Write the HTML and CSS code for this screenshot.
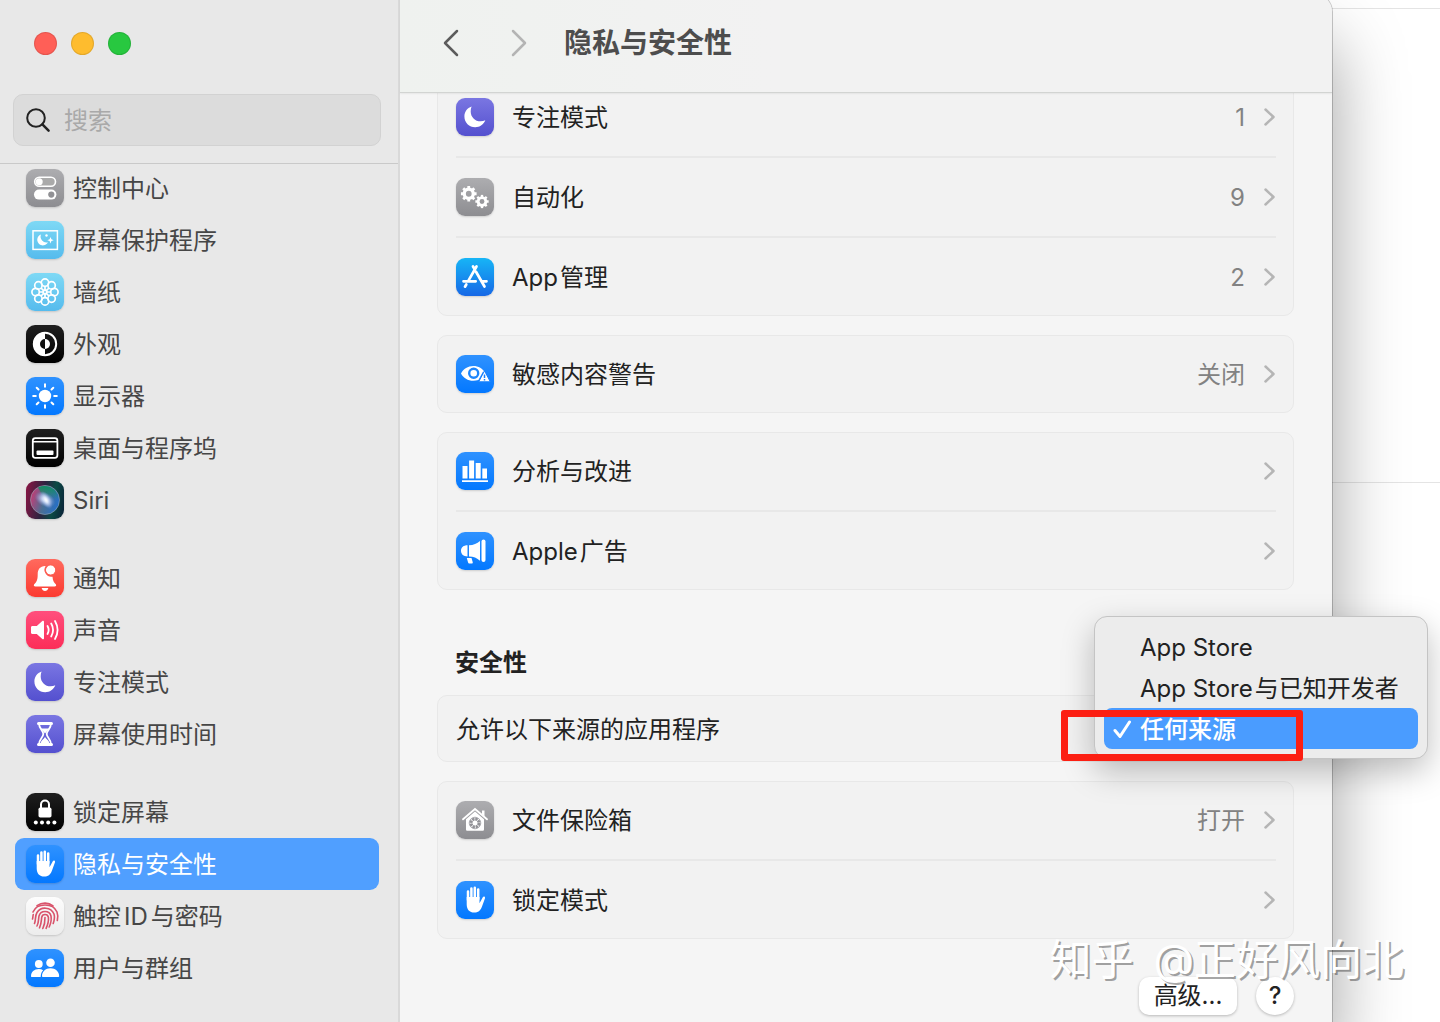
FILE: index.html
```html
<!DOCTYPE html>
<html lang="zh-CN">
<head>
    <meta charset="UTF-8">
    <meta name="viewport" content="width=device-width, initial-scale=1.0">
    <title>隐私与安全性</title>
    <link rel="stylesheet" href="styles.css">
</head>
<body>
    <svg class="sprite" aria-hidden="true">
        <symbol id="moon" viewBox="0 0 38 38">
            <path fill="#fff" d="M15.6 8.6c-4.400 1.500-7.200 5.400-7.200 9.900 0 6 4.800 10.800 10.800 10.800 4.500 0 8.600-2.800 10.100-7-1.500.7-3 1-4.600 1-5.600 0-10-4.300-10-9.900 0-1.700.3-3.300.9-4.800z"/>
        </symbol>
        <symbol id="hand" viewBox="0 0 38 38">
            <path fill="none" stroke="#fff" stroke-width="2.500" stroke-linecap="round" d="M12 19V10.500M15.400 18V7.500M18.800 18V6.800M22.200 18V8.500"/>
            <path fill="#fff" d="M10.700 16h12.800v6.200l3.300-5.900c.8-1.300 2.600-.6 2.200.9l-3 8.300c-1.500 4.300-4 6.100-7.700 6.100-4.800 0-7.600-3.200-7.600-8.100z"/>
        </symbol>
        <symbol id="chevron" viewBox="0 0 12 20">
            <path fill="none" stroke="currentColor" stroke-width="2.500" stroke-linecap="round" stroke-linejoin="round" d="M1.500 2.500l8 7.500-8 7.500"/>
        </symbol>
        <symbol id="gear" viewBox="-10 -10 20 20">
            <circle r="5.500" fill="none" stroke="#fff" stroke-width="4"/>
            <path stroke="#fff" stroke-width="3.400" d="M0-9.500V-6M0 9.500V6M-9.500 0H-6M9.500 0H6M-6.700-6.700l2.400 2.400M6.700 6.700L4.300 4.300M-6.700 6.700l2.400-2.400M6.700-6.700L4.300-4.300"/>
        </symbol>
    </svg>

    <div class="backdrop">
        <div class="backdrop-line"></div>
        <div class="backdrop-line"></div>
    </div>

    <div class="window">
        <aside class="sidebar">
            <div class="sidebar-header">
                <div class="lights">
                    <button class="light red" aria-label="关闭"></button>
                    <button class="light yellow" aria-label="最小化"></button>
                    <button class="light green" aria-label="缩放"></button>
                </div>
                <label class="search">
                    <svg width="26" height="26" viewBox="0 0 26 26"><circle cx="11" cy="11" r="8.800" fill="none" stroke="#222" stroke-width="2"/><path d="M17.400 17.400l6.200 6.200" stroke="#222" stroke-width="2.500" stroke-linecap="round"/></svg>
                    <input type="text" placeholder="搜索" aria-label="搜索">
                </label>
            </div>

            <nav class="menu">
                <ul>
                    <li><a href="#"><svg class="icon gray" viewBox="0 0 38 38"><rect x="8.700" y="8.200" width="20.800" height="9" rx="4.500" fill="#aaa" stroke="#fff" stroke-width="1.600"/><circle cx="13.200" cy="12.700" r="3.500" fill="#fff"/><rect x="8" y="20.600" width="22.400" height="10" rx="5" fill="#fff"/><circle cx="25.300" cy="25.600" r="3.100" fill="#919195"/></svg><span>控制中心</span></a></li>
                    <li><a href="#"><svg class="icon sky" viewBox="0 0 38 38"><rect x="7" y="9.800" width="24.400" height="18.600" fill="none" stroke="#fff" stroke-width="1.500"/><path fill="#fff" d="M15 13.500a5.600 5.600 0 1 0 6.900 7.700 5.800 5.800 0 0 1-6.900-7.700zM24.500 16l.9 2.300 2.300.9-2.300.9-.9 2.300-.9-2.300-2.300-.9 2.300-.9z"/><circle cx="20.500" cy="14.500" r="1.200" fill="#fff"/></svg><span>屏幕保护程序</span></a></li>
                    <li><a href="#"><svg class="icon sky" viewBox="0 0 38 38"><g fill="none" stroke="#fff" stroke-width="1.700"><circle cx="19" cy="9.600" r="3.700"/><circle cx="25.600" cy="12.400" r="3.700"/><circle cx="28.400" cy="19" r="3.700"/><circle cx="25.600" cy="25.600" r="3.700"/><circle cx="19" cy="28.400" r="3.700"/><circle cx="12.400" cy="25.600" r="3.700"/><circle cx="9.600" cy="19" r="3.700"/><circle cx="12.400" cy="12.400" r="3.700"/><circle cx="19" cy="19" r="1.800"/><path d="M19 13.300v4M19 24.700v-4M13.300 19h4M24.700 19h-4M15 15l2.700 2.700M23 23l-2.700-2.700M15 23l2.700-2.700M23 15l-2.700 2.700"/></g></svg><span>墙纸</span></a></li>
                    <li><a href="#"><svg class="icon black" viewBox="0 0 38 38"><circle cx="19" cy="19" r="11.200" fill="none" stroke="#fff" stroke-width="2"/><path fill="#fff" d="M19 7.300a11.700 11.700 0 0 0 0 23.400V24a5 5 0 0 1 0-10z"/><path fill="#fff" d="M19 14a5 5 0 0 1 0 10z"/></svg><span>外观</span></a></li>
                    <li><a href="#"><svg class="icon blue" viewBox="0 0 38 38"><circle cx="19" cy="19" r="6.200" fill="#fff"/><path stroke="#fff" stroke-width="2" stroke-linecap="round" d="M19 7.200v2.600M19 28.200v2.600M7.200 19h2.600M28.200 19h2.600M10.700 10.700l1.800 1.800M25.500 25.500l1.800 1.800M10.700 27.300l1.800-1.800M25.500 12.500l1.800-1.800"/></svg><span>显示器</span></a></li>
                    <li><a href="#"><svg class="icon black" viewBox="0 0 38 38"><rect x="6.800" y="9.200" width="24.600" height="19.600" rx="2.500" fill="none" stroke="#fff" stroke-width="1.800"/><path stroke="#fff" stroke-width="1.500" d="M7 12.800h24"/><rect x="10.500" y="21.500" width="17" height="4.500" rx="1" fill="#fff"/></svg><span>桌面与程序坞</span></a></li>
                    <li><a href="#"><svg class="icon siri" viewBox="0 0 38 38">
                        <defs>
                            <radialGradient id="orb"><stop offset="0" stop-color="#fff"/><stop offset=".25" stop-color="#e4eefc" stop-opacity=".9"/><stop offset="1" stop-color="#7f9be0" stop-opacity="0"/></radialGradient>
                            <linearGradient id="ring" x1="0" y1=".3" x2="1" y2=".6"><stop offset="0" stop-color="#c83a74"/><stop offset=".5" stop-color="#4a6f93"/><stop offset="1" stop-color="#2470c8"/></linearGradient>
                            <linearGradient id="aurora" x1="0" y1="0" x2="0" y2="1"><stop offset="0" stop-color="#0d8f62"/><stop offset="1" stop-color="#0d8f62" stop-opacity="0"/></linearGradient>
                        </defs>
                        <circle cx="19" cy="19" r="14.500" fill="url(#ring)" stroke="#9aa8b8" stroke-opacity=".6"/>
                        <path fill="url(#aurora)" d="M12 6.500c9-4 19 1 20.500 11-5 1-12 1-15-1z"/>
                        <ellipse cx="19" cy="18.500" rx="11" ry="7" fill="url(#orb)" transform="rotate(28 19 18.500)"/>
                        <ellipse cx="20" cy="19" rx="5" ry="10" fill="url(#orb)" transform="rotate(-30 20 19)"/></svg><span>Siri</span></a></li>
                </ul>
                <ul>
                    <li><a href="#"><svg class="icon red" viewBox="0 0 38 38"><path fill="#fff" d="M19 7c-4.800 0-7.300 3.600-7.300 8.200 0 6.300-1.300 7.800-3.500 10.100-.8 1-.3 2.200 1.200 2.200h19.200c1.500 0 2-1.200 1.200-2.200-1.700-1.800-3-3.500-3.300-7.600A7 7 0 0 1 19.600 7zM15.600 29h6.800c-.5 1.900-1.800 2.900-3.400 2.900s-2.900-1-3.400-2.900z"/><circle cx="24.600" cy="11" r="4.700" fill="#fff"/><circle cx="24.600" cy="11" r="5.300" fill="none" stroke="#fb6054" stroke-width="1"/></svg><span>通知</span></a></li>
                    <li><a href="#"><svg class="icon pink" viewBox="0 0 38 38"><path fill="#fff" d="M6.500 15h4.300l5.500-5c.8-.7 1.700-.3 1.700.7v16.600c0 1-.9 1.400-1.700.7l-5.500-5H6.500c-1 0-1.500-.6-1.500-1.500v-5c0-.9.5-1.500 1.500-1.500z"/><path fill="none" stroke="#fff" stroke-width="1.800" stroke-linecap="round" d="M21.500 15a8 8 0 0 1 0 8M25.200 12.500a13 13 0 0 1 0 13M29 10a18 18 0 0 1 0 18"/></svg><span>声音</span></a></li>
                    <li><a href="#"><svg class="icon indigo"><use href="#moon"/></svg><span>专注模式</span></a></li>
                    <li><a href="#"><svg class="icon indigo" viewBox="0 0 38 38"><path fill="none" stroke="#fff" stroke-width="1.800" stroke-linejoin="round" d="M13 8.500c0 5.500 4.300 7 4.300 10.500S13 24 13 29.500h12c0-5.500-4.300-7-4.300-10.500S25 14 25 8.500z"/><path stroke="#fff" stroke-width="3" stroke-linecap="round" d="M12.500 8.500h13M12.500 29.500h13"/><path fill="#fff" d="M14.800 13.500h8.400L19 18.500zM14.500 28.500c.5-3 2.800-4 4.500-6.500 1.700 2.500 4 3.500 4.500 6.500z"/></svg><span>屏幕使用时间</span></a></li>
                </ul>
                <ul>
                    <li><a href="#"><svg class="icon black" viewBox="0 0 38 38"><rect x="12.500" y="14.500" width="13" height="10" rx="1.800" fill="#fff"/><path fill="none" stroke="#fff" stroke-width="2" d="M15 15v-3.500a4 4 0 0 1 8 0V15"/><g fill="#fff"><circle cx="9.800" cy="29.500" r="2"/><circle cx="16" cy="29.500" r="2"/><circle cx="22.200" cy="29.500" r="2"/><circle cx="28.400" cy="29.500" r="2"/></g></svg><span>锁定屏幕</span></a></li>
                    <li><a href="#" class="active" aria-current="page"><svg class="icon blue"><use href="#hand"/></svg><span>隐私与安全性</span></a></li>
                    <li><a href="#"><svg class="icon white" viewBox="0 0 38 38"><g fill="none" stroke="#d9536b" stroke-width="1.600" stroke-linecap="round"><path d="M11 8.600C16 5.200 22.500 5.300 27 8.800"/><path d="M7 15c4-9.300 20-9.300 24 0 .9 2.200 1 5 .3 8.500"/><path d="M6.500 22c.5-1.500.3-3 .8-4.500"/><path d="M8.500 26.500c1.500-3.500.3-7.500 2.500-11 4-6.500 14-5.500 17 1.500.9 3 .3 6.500-.8 9.500"/><path d="M11 29c2-4 1.300-7 2-10 1.500-6 10.500-6 12 0 .7 3.800-.2 7.500-1.800 11"/><path d="M13.500 30.800c2-4.300 1.800-7.300 2.200-10.500.7-3.700 6-3.700 6.700 0 .4 3.700-.7 7.500-2.300 11"/><path d="M16.800 31.500c1.700-3.500 2.300-7 2.200-11"/></g></svg><span>触控<span class="latin">ID</span>与密码</span></a></li>
                    <li><a href="#"><svg class="icon blue" viewBox="0 0 38 38"><g fill="#fff"><circle cx="12.800" cy="15" r="3.900"/><path d="M5 27.500c0-4.700 3.300-7.500 7.800-7.500 1.700 0 3.200.4 4.400 1.200-1.600 1.600-2.500 3.800-2.500 6.800H5.600c-.4 0-.6-.2-.6-.5z"/><circle cx="24.500" cy="13.800" r="4.300"/><path d="M16 27.300c0-4.700 3.500-8 8.500-8s8.700 3.300 8.700 8c0 .5-.3.800-.8.800H16.800c-.5 0-.8-.3-.8-.8z"/></g></svg><span>用户与群组</span></a></li>
                </ul>
            </nav>
        </aside>

        <main class="main">
            <header class="toolbar">
                <button class="nav-button" aria-label="后退"><svg width="18" height="30" viewBox="0 0 18 30"><path fill="none" stroke="#5c5c5c" stroke-width="2.500" stroke-linecap="round" stroke-linejoin="round" d="M15 3L3 15l12 12"/></svg></button>
                <button class="nav-button" aria-label="前进"><svg width="18" height="30" viewBox="0 0 18 30"><path fill="none" stroke="#b4b4b4" stroke-width="2.500" stroke-linecap="round" stroke-linejoin="round" d="M3 3l12 12L3 27"/></svg></button>
                <h1>隐私与安全性</h1>
            </header>

            <div class="content">
                <ul class="card">
                    <li class="row">
                        <svg class="icon indigo"><use href="#moon"/></svg>
                        <span class="name">专注模式</span>
                        <span class="value">1</span>
                        <svg class="chevron"><use href="#chevron"/></svg>
                    </li>
                    <li class="row">
                        <svg class="icon gray" viewBox="0 0 38 38"><use href="#gear" x="4.500" y="7.500" width="16.500" height="16.500"/><use href="#gear" x="19" y="16.500" width="14" height="14"/></svg>
                        <span class="name">自动化</span>
                        <span class="value">9</span>
                        <svg class="chevron"><use href="#chevron"/></svg>
                    </li>
                    <li class="row">
                        <svg class="icon store" viewBox="0 0 38 38"><path fill="none" stroke="#fff" stroke-width="2.700" stroke-linecap="round" d="M20.500 8.500L12.600 22.300M17 8.500l2 3.300M20 13.800l8.500 14.700M7.500 23.300h12.200M25.500 23.300h5M10.300 26.500l-1.300 2.200"/></svg>
                        <span class="name"><span class="latin-start">App</span>管理</span>
                        <span class="value">2</span>
                        <svg class="chevron"><use href="#chevron"/></svg>
                    </li>
                </ul>

                <ul class="card">
                    <li class="row">
                        <svg class="icon blue" viewBox="0 0 38 38"><path fill="#fff" d="M5 18.500C7.500 13.800 12 11 17.200 11c5.300 0 9.500 2.700 12 6.500l-2.300-.7-4.500 8.200c-1.600.5-3.400.8-5.200.8-5.300 0-9.800-2.700-12.200-7.300z"/><circle cx="17.700" cy="18.300" r="4.500" fill="none" stroke="#1e86fc" stroke-width="2.400"/><path fill="#fff" stroke="#1580ff" stroke-width="1" stroke-linejoin="round" d="M28.500 15.800l5.800 11H22.700z"/><path stroke="#1580ff" stroke-width="1.500" d="M28.500 19.500v3.500M28.500 24v1.500"/></svg>
                        <span class="name">敏感内容警告</span>
                        <span class="value">关闭</span>
                        <svg class="chevron"><use href="#chevron"/></svg>
                    </li>
                </ul>

                <ul class="card">
                    <li class="row">
                        <svg class="icon blue" viewBox="0 0 38 38"><path fill="#fff" d="M6.500 14h5v12.500h-5zM13.100 8.500h5v18h-5zM19.700 11h5v15.500h-5zM26.300 16.500h4.700v10h-4.700zM6 28.300h26V30H6z"/></svg>
                        <span class="name">分析与改进</span>
                        <svg class="chevron"><use href="#chevron"/></svg>
                    </li>
                    <li class="row">
                        <svg class="icon blue" viewBox="0 0 38 38"><path fill="#fff" d="M11.500 13.200v11.300C7.500 24.500 5 22.300 5 18.800s2.500-5.600 6.500-5.600zM13 13.200c4.500 0 8-1.500 11-4.200v19.800c-3-2.700-6.500-4.200-11-4.200zM10.800 26h4.700l1.200 4c.3 1-.3 1.500-1 1.500h-2c-1 0-1.500-.5-1.700-1.300z"/><rect x="25.500" y="7.500" width="4" height="22.500" rx="2" fill="#fff"/></svg>
                        <span class="name"><span class="latin-start">Apple</span>广告</span>
                        <svg class="chevron"><use href="#chevron"/></svg>
                    </li>
                </ul>

                <h2>安全性</h2>
                <div class="card source-card">
                    <span id="sourceLabel" class="source-label">允许以下来源的应用程序</span>
                    <div class="popup" role="listbox" aria-labelledby="sourceLabel">
                        <button class="option" role="option" aria-selected="false">App Store</button>
                        <button class="option" role="option" aria-selected="false"><span class="latin-start">App Store</span>与已知开发者</button>
                        <button class="option selected" role="option" aria-selected="true">
                            <svg class="check" width="20" height="20" viewBox="0 0 20 20"><path fill="none" stroke="#fff" stroke-width="3" stroke-linecap="round" stroke-linejoin="round" d="M2 11.500l5 6L16.500 3"/></svg>任何来源</button>
                        <div class="highlight"></div>
                    </div>
                </div>

                <ul class="card">
                    <li class="row">
                        <svg class="icon gray" viewBox="0 0 38 38"><path fill="none" stroke="#fff" stroke-width="1.800" stroke-linecap="round" d="M7 18.300L19 8l12 10.300"/><path fill="#fff" d="M26 9.500h2.500v6L26 13.300zM10 18.300l9-7.800 9 7.800v10c0 1-.6 1.500-1.500 1.500h-15c-.9 0-1.500-.5-1.500-1.500z"/><circle cx="19" cy="22" r="4" fill="none" stroke="#929297" stroke-width="3" stroke-dasharray="2.400 .7"/><circle cx="19" cy="22" r="5.800" fill="none" stroke="#a0a0a4" stroke-width=".8"/></svg>
                        <span class="name">文件保险箱</span>
                        <span class="value">打开</span>
                        <svg class="chevron"><use href="#chevron"/></svg>
                    </li>
                    <li class="row">
                        <svg class="icon blue"><use href="#hand"/></svg>
                        <span class="name">锁定模式</span>
                        <svg class="chevron"><use href="#chevron"/></svg>
                    </li>
                </ul>

                <div class="actions">
                    <button class="advanced">高级...</button>
                    <button class="help" aria-label="帮助">?</button>
                </div>
            </div>
        </main>
    </div>

    <div class="watermark"><span class="site">知乎</span> @正好风向北</div>
</body>
</html>
```

FILE: styles.css
```css
* {
    margin: 0;
    padding: 0;
    box-sizing: border-box;
}

body {
    background: #fff;
    color: #222;
    font-family: Inter, 'Noto Sans CJK SC', sans-serif;
    font-size: 24px;
    line-height: 32px;
    height: 100vh;
    overflow: hidden;
    position: relative;
}

ul {
    list-style: none;
}

button {
    border: none;
    background: none;
    font: inherit;
    color: inherit;
}

.sprite {
    position: absolute;
    width: 0;
    height: 0;
}

/* page behind the window */
.backdrop {
    position: absolute;
    inset: 0;
    padding-top: 8px;
}

.backdrop-line {
    height: 474px;
    border-top: 1px solid #e4e4e4;
}

/* window */
.window {
    position: relative;
    display: flex;
    margin-top: -6px;
    margin-right: 108px;
    height: calc(100vh + 6px);
    background: #f5f5f5;
    border-top-right-radius: 18px;
    box-shadow: 0 0 0 1px rgba(0, 0, 0, 0.2), 0 48px 72px rgba(0, 0, 0, 0.38);
}

.sidebar {
    width: 400px;
    flex-shrink: 0;
    background: #e8e8e8;
    border-right: 2px solid #d9d9d9;
    overflow: hidden;
}

.sidebar-header {
    position: relative;
    z-index: 1;
    padding: 38px 17px 17px 13px;
    border-bottom: 1px solid #c9c9c9;
}

.lights {
    display: flex;
    gap: 14px;
    padding-left: 21px;
    margin-bottom: 39px;
}

.light {
    width: 23px;
    height: 23px;
    border-radius: 50%;
    border: 1px solid rgba(0, 0, 0, 0.1);
}

.light.red { background: #ff5f57; }
.light.yellow { background: #febc2e; }
.light.green { background: #28c840; }

.search {
    display: flex;
    align-items: center;
    gap: 13px;
    height: 52px;
    padding: 0 11px;
    background: #dcdcdc;
    border: 1px solid #d2d2d2;
    border-radius: 10px;
}

.search input {
    flex: 1;
    min-width: 0;
    padding-top: 2px;
    border: none;
    outline: none;
    background: none;
    font: inherit;
}

.search input::placeholder {
    color: #a9a9a9;
}

.menu {
    margin-top: -2px;
    padding: 0 19px 0 15px;
}

.menu ul + ul {
    margin-top: 26px;
}

.menu a {
    display: flex;
    align-items: center;
    height: 52px;
    padding-left: 11px;
    border-radius: 9px;
    color: #464646;
    text-decoration: none;
}

.menu .icon {
    margin-right: 9px;
}

.menu a > span {
    padding-top: 2px;
}

.menu a.active {
    background: #509fff;
    color: #fff;
}

.latin {
    margin: 0 3px;
}

.latin-start {
    margin-right: 2px;
}

/* icons */
.icon {
    width: 38px;
    height: 38px;
    flex-shrink: 0;
    border-radius: 9px;
    box-shadow: 0 1px 2px rgba(0, 0, 0, 0.15);
}

.icon.gray { background: linear-gradient(#adadb0, #8d8d91); }
.icon.sky { background: linear-gradient(#7fd9f5, #55bbed); }
.icon.black { background: linear-gradient(#1f1f1f, #000); }
.icon.blue { background: linear-gradient(#2f92ff, #0378ff); }
.icon.red { background: linear-gradient(#ff6a5e, #fb3a30); }
.icon.pink { background: linear-gradient(#ff4f7d, #fc2d58); }
.icon.indigo { background: linear-gradient(#7a76e2, #5450cf); }
.icon.white { background: linear-gradient(#fdfdfd, #ececec); }
.icon.store { background: linear-gradient(#17b5f6, #1768e6); }
.icon.siri { background: linear-gradient(100deg, #8c1544, #2d2440 45%, #0b4a44 70%, #0b2038); }

.chevron {
    width: 12px;
    height: 20px;
    flex-shrink: 0;
    color: #b5b5b5;
}

/* right side */
.main {
    flex: 1;
    min-width: 0;
}

.toolbar {
    position: relative;
    z-index: 1;
    display: flex;
    align-items: center;
    height: 99px;
    padding-left: 42px;
    background: linear-gradient(90deg, #eff2ef, #f2f2f2 40%);
    border-bottom: 1px solid #d2d4d2;
    border-top-right-radius: 18px;
    box-shadow: 0 1px 2px rgba(0, 0, 0, 0.06);
}

.nav-button {
    display: flex;
    margin-right: 50px;
}

.nav-button + .nav-button {
    margin-right: 36px;
}

h1 {
    font-size: 28px;
    line-height: 36px;
    font-weight: 700;
    color: #4d4d4d;
}

.content {
    display: flex;
    flex-direction: column;
    margin-top: -15px;
    padding: 0 38px 0 37px;
}

.card {
    background: #f2f2f2;
    border: 1px solid #e8e8e8;
    border-radius: 10px;
    padding: 0 17px 0 18px;
}

.card + .card {
    margin-top: 19px;
}

.row {
    box-sizing: content-box;
    display: flex;
    align-items: center;
    height: 76px;
}

.row + .row {
    margin-top: 1px;
    padding-top: 1px;
    border-top: 2px solid #e8e8e8;
}

.name,
.value,
.source-label {
    padding-top: 2px;
}

.name {
    flex: 1;
    margin-left: 18px;
}

.value {
    color: #828282;
    margin-right: 19px;
}

h2 {
    margin: 57px 18px 16px;
    font-size: 24px;
    line-height: 32px;
    font-weight: 700;
}

.source-card {
    position: relative;
    display: flex;
    align-items: center;
    height: 67px;
}

/* open drop-down */
.popup {
    position: absolute;
    z-index: 2;
    top: -80px;
    right: -135px;
    width: 334px;
    padding: 9px;
    background: #ececec;
    border: 1px solid #c4c4c4;
    border-radius: 13px;
    box-shadow: 0 12px 32px rgba(0, 0, 0, 0.25);
}

.option {
    position: relative;
    display: block;
    width: 100%;
    height: 41px;
    padding-top: 2px;
    padding-left: 36px;
    border-radius: 8px;
    text-align: left;
    white-space: nowrap;
}

.option.selected {
    background: #4a9cff;
    color: #fff;
    font-weight: 500;
}

.check {
    position: absolute;
    left: 9px;
    top: 11px;
}

.highlight {
    position: absolute;
    top: 93px;
    left: -34px;
    width: 242px;
    height: 51px;
    border: 7px solid #fc1f12;
    border-radius: 3px;
}

.actions {
    display: flex;
    justify-content: flex-end;
    gap: 19px;
    margin-top: 38px;
}

.advanced,
.help {
    height: 38px;
    background: #fff;
    border-radius: 10px;
    box-shadow: 0 1px 3px rgba(0, 0, 0, 0.25);
}

.advanced {
    width: 98px;
}

.help {
    width: 38px;
    border-radius: 50%;
    font-weight: 500;
}

.watermark {
    position: absolute;
    right: 36px;
    bottom: 32px;
    font-size: 42px;
    line-height: 60px;
    color: #fff;
    text-shadow: 2px 2px 0 rgba(0, 0, 0, 0.35);
    white-space: nowrap;
}

.watermark .site {
    margin-right: 8px;
}
```
